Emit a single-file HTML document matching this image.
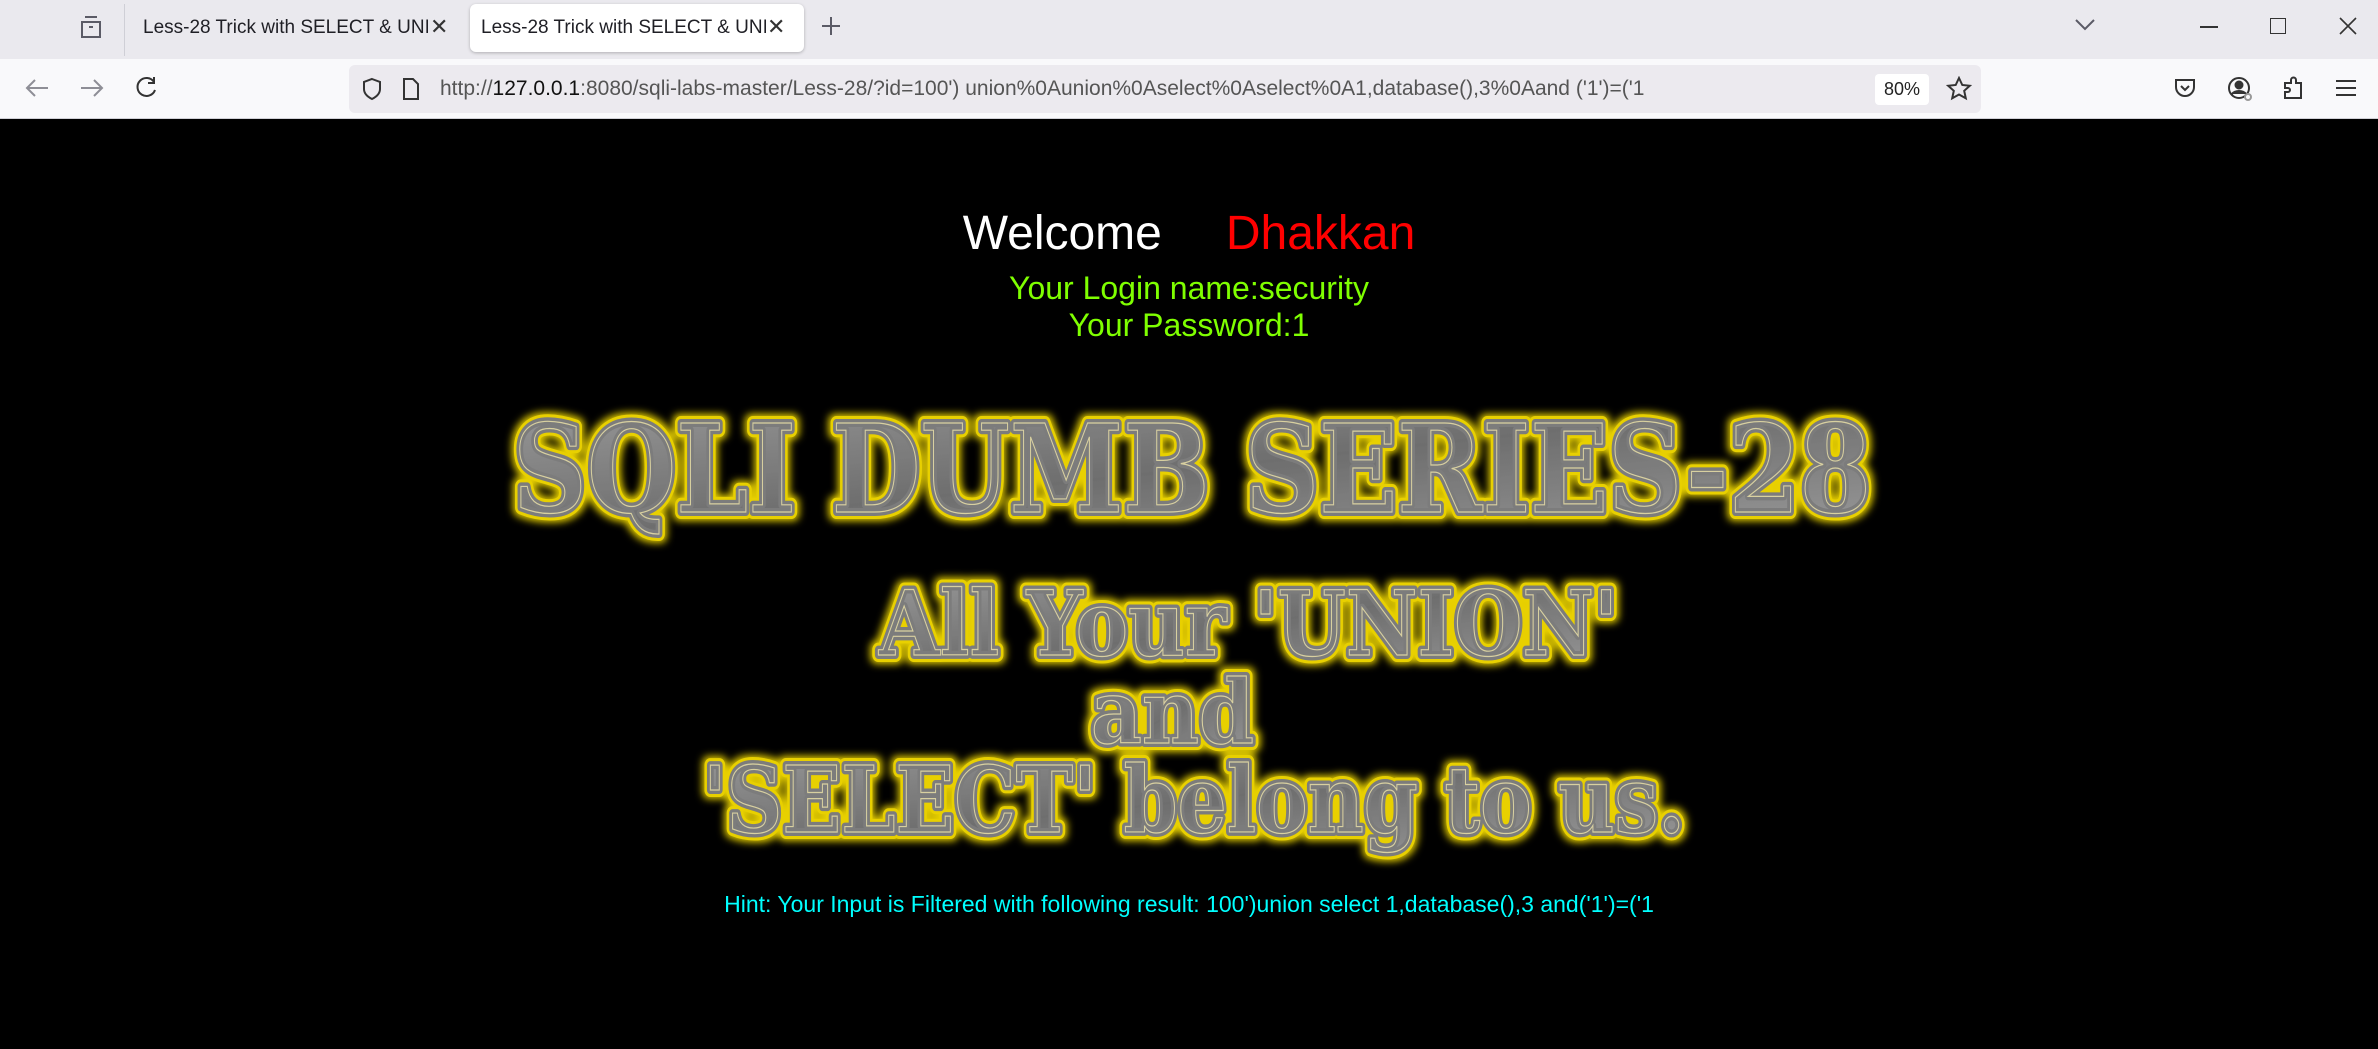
<!DOCTYPE html>
<html><head><meta charset="utf-8"><style>
*{margin:0;padding:0;box-sizing:border-box}
body{width:2378px;height:1049px;overflow:hidden;background:#000;font-family:"Liberation Sans",sans-serif;position:relative}
.tabbar{position:absolute;left:0;top:0;width:2378px;height:59px;background:#eae9ee}
.toolbar{position:absolute;left:0;top:59px;width:2378px;height:60px;background:#f9f9fb;border-bottom:1px solid #d0d0d6}
.tab{position:absolute;top:4px;height:48px;font-size:19px;color:#1f1f25;line-height:48px}
.tab2{left:470px;width:334px;background:#fff;border-radius:6px;box-shadow:0 1px 3px rgba(0,0,0,.25)}
.url{position:absolute;left:349px;top:65px;width:1632px;height:48px;background:#eceaef;border-radius:6px}
.abs{position:absolute}
.c{position:absolute;left:0;width:2378px;text-align:center}
</style></head><body>
<div class="tabbar">
<svg class="abs" style="left:79px;top:14px" width="24" height="26" viewBox="0 0 24 26" fill="none" stroke="#5b5b66" stroke-width="2"><path d="M6 3h12M3 8h18v15H3z"/><path d="M10 13h4"/></svg>
<div class="abs" style="left:124px;top:4px;width:1px;height:52px;background:#cfcfd6"></div>
<div class="tab" style="left:143px;width:285px;overflow:hidden;white-space:nowrap">Less-28 Trick with SELECT &amp; UNIO</div>
<div class="abs" style="left:430px;top:14px;font-size:22px;color:#333">✕</div>
<div class="tab tab2"><span style="margin-left:11px;display:inline-block;width:285px;overflow:hidden;white-space:nowrap;vertical-align:top">Less-28 Trick with SELECT &amp; UNIO</span></div>
<div class="abs" style="left:767px;top:14px;font-size:22px;color:#333">✕</div>
<svg class="abs" style="left:820px;top:15px" width="22" height="22" stroke="#5b5b66" stroke-width="2"><path d="M11 2v18M2 11h18"/></svg>
<svg class="abs" style="left:2074px;top:18px" width="22" height="14" fill="none" stroke="#5b5b66" stroke-width="2"><path d="M2 2l9 9 9-9"/></svg>
<div class="abs" style="left:2200px;top:26px;width:18px;height:2px;background:#333"></div>
<div class="abs" style="left:2270px;top:18px;width:16px;height:16px;border:1.5px solid #333"></div>
<svg class="abs" style="left:2338px;top:16px" width="20" height="20" stroke="#333" stroke-width="1.6"><path d="M2 2l16 16M18 2L2 18"/></svg>
</div>
<div class="toolbar">
<svg class="abs" style="left:24px;top:17px" width="26" height="24" fill="none" stroke="#8e8e96" stroke-width="2"><path d="M24 12H3M11 4l-8 8 8 8"/></svg>
<svg class="abs" style="left:79px;top:17px" width="26" height="24" fill="none" stroke="#8e8e96" stroke-width="2"><path d="M2 12h21M15 4l8 8-8 8"/></svg>
<svg class="abs" style="left:134px;top:16px" width="26" height="26" fill="none" stroke="#333" stroke-width="2"><path d="M20 7A9 9 0 1 0 21 15"/><path d="M20 2v6h-6"/></svg>
</div>
<div class="url">
<svg class="abs" style="left:12px;top:12px" width="22" height="24" fill="none" stroke="#333" stroke-width="2"><path d="M11 2l8 3v7c0 5-4 8-8 10-4-2-8-5-8-10V5z"/></svg>
<svg class="abs" style="left:53px;top:12px" width="18" height="24" fill="none" stroke="#333" stroke-width="2"><path d="M2 2h9l5 5v15H2z"/></svg>
<div class="abs" style="left:91px;top:12px;font-size:21px;color:#555;white-space:nowrap">http://<span style="color:#111">127.0.0.1</span>:8080/sqli-labs-master/Less-28/?id=100') union%0Aunion%0Aselect%0Aselect%0A1,database(),3%0Aand ('1')=('1</div>
<div class="abs" style="left:1526px;top:9px;width:54px;height:31px;background:#fff;border-radius:4px;font-size:18px;text-align:center;line-height:31px;color:#222">80%</div>
<svg class="abs" style="left:1597px;top:11px" width="26" height="26" fill="none" stroke="#333" stroke-width="2"><path d="M13 2l3.3 7 7.5.8-5.6 5 1.6 7.5L13 18.5 6.2 22.3l1.6-7.5-5.6-5 7.5-.8z"/></svg>
</div>
<svg class="abs" style="left:2173px;top:76px" width="24" height="24" fill="none" stroke="#333" stroke-width="2"><path d="M3 4h18v7a9 9 0 0 1-18 0z"/><path d="M8 10l4 4 4-4"/></svg>
<svg class="abs" style="left:2226px;top:75px" width="28" height="28" fill="none" stroke="#333" stroke-width="2"><circle cx="13" cy="13" r="10"/><circle cx="13" cy="10" r="3.5" fill="#333"/><path d="M6 19c3-4 11-4 14 0" fill="#333"/><circle cx="22" cy="22" r="3" stroke="#999" fill="#f9f9fb"/></svg>
<svg class="abs" style="left:2282px;top:75px" width="24" height="26" fill="none" stroke="#333" stroke-width="2"><path d="M3 23v-6h3a2 2 0 0 0 0-4H3V8h6V5a2.5 2.5 0 0 1 5 0v3h5v15z"/></svg>
<svg class="abs" style="left:2335px;top:78px" width="22" height="20" stroke="#333" stroke-width="2"><path d="M1 3h20M1 10h20M1 17h20"/></svg>

<div class="c" style="top:206px;font-size:48px;line-height:56px"><span style="color:#fff">Welcome</span><span style="color:#ff0000;margin-left:64px">Dhakkan</span></div>
<div class="c" style="top:269px;font-size:32px;line-height:38px;color:#7fff00">Your Login name:security</div>
<div class="c" style="top:306px;font-size:32px;line-height:38px;color:#7fff00">Your Password:1</div>

<svg class="abs" style="left:0;top:0" width="2378" height="1049">
<defs>
<linearGradient id="g" x1="0" y1="0" x2="1" y2="1">
<stop offset="0" stop-color="#9a9a9a"/><stop offset=".5" stop-color="#6e6e6e"/><stop offset="1" stop-color="#9b9b9b"/></linearGradient>
<filter id="glow" x="-5%" y="-30%" width="110%" height="160%">
<feMorphology in="SourceAlpha" operator="dilate" radius="2" result="d"/>
<feGaussianBlur in="d" stdDeviation="4" result="b"/>
<feFlood flood-color="#e8d000"/><feComposite in2="b" operator="in" result="y"/>
<feMerge><feMergeNode in="y"/><feMergeNode in="SourceGraphic"/></feMerge>
</filter>
<g id="t" font-family="DejaVu Serif,Liberation Serif,serif" font-weight="900">
<text x="513" y="512" font-size="122" textLength="1358" lengthAdjust="spacingAndGlyphs">SQLI DUMB SERIES-28</text>
<text x="879" y="655" font-size="90" textLength="739" lengthAdjust="spacingAndGlyphs">All Your 'UNION'</text>
<text x="1091" y="743" font-size="88" textLength="163" lengthAdjust="spacingAndGlyphs">and</text>
<text x="703" y="832" font-size="92" textLength="982" lengthAdjust="spacingAndGlyphs">'SELECT' belong to us.</text>
</g>
</defs>
<g filter="url(#glow)">
<use href="#t" fill="#e8d000" stroke="#e8d000" stroke-width="14" stroke-linejoin="round"/>
<use href="#t" fill="url(#g)" stroke="#7c7c7c" stroke-width="8" stroke-linejoin="round"/>
<use href="#t" fill="none" stroke="#d8d0a0" stroke-width="1.2"/>
</g>
</svg>

<div class="c" style="top:889px;font-size:23px;line-height:30px;color:#00ffff">Hint: Your Input is Filtered with following result: 100')union select 1,database(),3 and('1')=('1</div>
</body></html>
